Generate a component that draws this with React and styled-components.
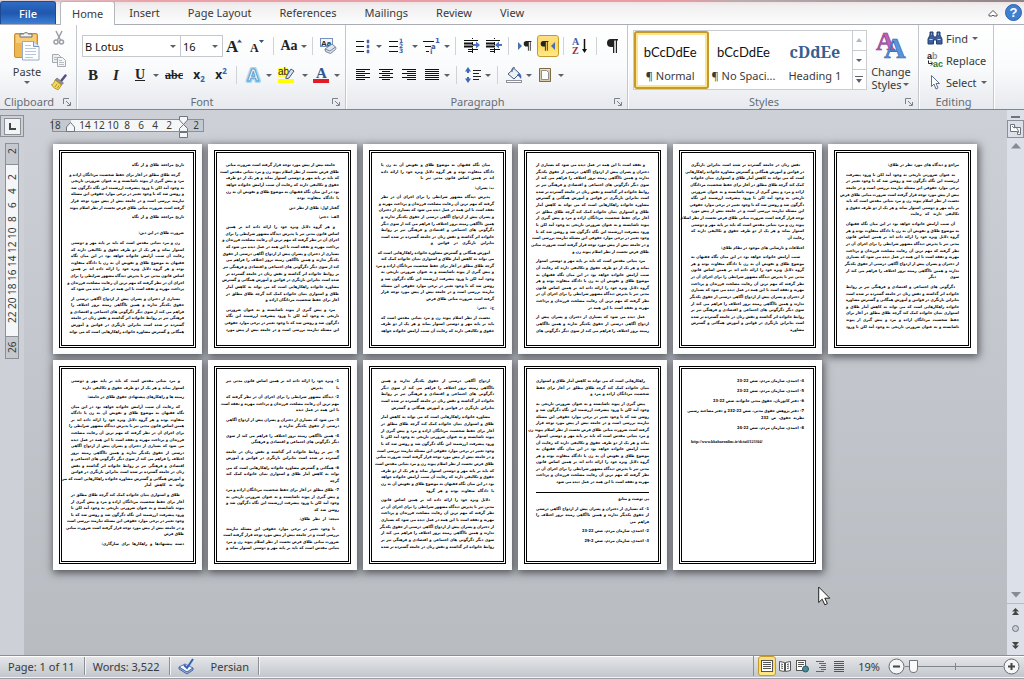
import styled, { createGlobalStyle, css, ThemeProvider } from 'styled-components';

const theme = {
  ui: "'Noto Sans', 'Open Sans', sans-serif",
  text: '#3a3a3a',
  muted: '#666d76',
  gold: '#c59a2c',
};

const GlobalStyle = createGlobalStyle`
  * { box-sizing: border-box; }
  body {
    margin: 0;
    font-family: ${theme.ui};
    font-size: 11px;
    color: ${theme.text};
  }
  button, input { font: inherit; color: inherit; }
`;

const Window = styled.div`
  display: flex;
  flex-direction: column;
  min-height: 100vh;
  overflow: hidden;
`;

/* ---------- tabs ---------- */

const TabBar = styled.nav`
  display: flex;
  align-items: flex-end;
  height: 25px;
  padding-right: 2px;
  border-bottom: 1px solid #a9adb3;
  background:
    linear-gradient(to right, #d9d5d8 0, #e9a3ab 14%, #ea9aa3 66%, #b9adb0 72%, #8d8587 100%) 0 0 / 100% 2px no-repeat,
    linear-gradient(#efd8da 0, #f0eeef 5px, #fdfdfd 24px);
`;

const FileTab = styled.button`
  width: 56px;
  height: 23px;
  margin-right: 4px;
  padding: 0;
  border: 1px solid #1d4a93;
  border-bottom: 0;
  border-radius: 3px 3px 0 0;
  background: linear-gradient(#2f6cc4, #1f57ad 50%, #3d81d6);
  color: #fff;
  font-weight: 500;
`;

const Tab = styled.button`
  height: 23px;
  padding: 0 14px 1px;
  border: 0;
  background: none;

  ${({ $active }) =>
    $active &&
    css`
      height: 24px;
      padding: 0 11px 1px;
      margin-bottom: -1px;
      border: 1px solid #b4b8be;
      border-bottom: 0;
      border-radius: 3px 3px 0 0;
      background: #fff;
    `}
`;

const TabTools = styled.div`
  display: flex;
  align-items: center;
  gap: 7px;
  height: 23px;
  margin-left: auto;
`;

/* ---------- ribbon ---------- */

const Ribbon = styled.header`
  display: flex;
  height: 85px;
  border-bottom: 1px solid #80858c;
  background: linear-gradient(#fff, #fafbfc 50%, #e6e9ee);
`;

const GroupBox = styled.section`
  display: flex;
  flex-direction: column;
  flex: 0 0 ${({ $width }) => $width}px;
  min-width: 0;
  border-right: 1px solid #c3c7cd;
  box-shadow: 1px 0 #fff;
`;

const GroupBody = styled.div`
  display: flex;
  flex: 1;
  padding: 5px 0 0 5px;
`;

const GroupFoot = styled.div`
  display: flex;
  align-items: center;
  height: 15px;
  padding-right: 5px;
  color: ${({ theme: t }) => t.muted};

  span {
    flex: 1;
    text-align: center;
  }
`;

const PlainButton = styled.button`
  display: inline-flex;
  align-items: center;
  justify-content: center;
  padding: 0;
  border: 0;
  background: none;
`;

const Launcher = styled(PlainButton)`
  justify-content: flex-end;
  width: 13px;
`;

const Rows = styled.div`
  display: flex;
  flex-direction: column;
  gap: 7px;
  padding-top: 5px;
`;

const ToolRow = styled.div`
  display: flex;
  align-items: center;
  height: 22px;
`;

const Tool = styled(PlainButton)`
  flex: 0 0 ${({ $width = 22 }) => $width}px;
  height: 22px;
  color: #222;

  ${({ $on }) =>
    $on &&
    css`
      border: 1px solid ${theme.gold};
      border-radius: 3px;
      background: linear-gradient(#fbe08a, #ffd95c 50%, #ffe98f);
    `}
`;

const Divider = styled.span`
  flex: 0 0 1px;
  height: 18px;
  margin: 0 ${({ $gap = 4 }) => $gap}px;
  background: #cfd2d7;
`;

const Caret = styled.span`
  flex: 0 0 8px;
  display: inline-flex;
  justify-content: center;

  &::after {
    content: '';
    border: 3px solid transparent;
    border-top-color: #5c6068;
    border-bottom: 0;
  }
`;

const Combo = styled.label`
  display: flex;
  align-items: center;
  width: ${({ $width }) => $width}px;
  height: 22px;
  padding-right: 3px;
  border: 1px solid #c5c8cd;
  background: #fff;

  & + & {
    margin-left: -1px;
  }

  input {
    flex: 1;
    min-width: 0;
    padding: 0 2px;
    border: 0;
    outline: 0;
    background: none;
    color: #111;
  }
`;

const Glyph = styled.span`
  font-family: ${({ $sans }) => ($sans ? theme.ui : "'Liberation Serif', serif")};
  font-size: ${({ $size = 15 }) => $size}px;
  font-weight: 700;
  font-style: ${({ $italic }) => ($italic ? 'italic' : 'normal')};
  text-decoration: ${({ $line = 'none' }) => $line};
  line-height: 1;

  sup,
  sub {
    color: #3c62a8;
    font-size: 8px;
    line-height: 0;
  }
`;

/* clipboard */

const PasteButton = styled(PlainButton)`
  flex-direction: column;
  width: 44px;
  height: 62px;
  justify-content: flex-start;
  gap: 2px;
`;

const IconColumn = styled.div`
  display: flex;
  flex-direction: column;
  align-items: center;
  gap: 6px;
  width: 20px;
`;

/* styles gallery */

const Gallery = styled.div`
  display: flex;
  flex: 0 0 234px;
  height: 60px;
  border: 1px solid #c9ccd1;
  background: #fff;
`;

const StyleCard = styled.button`
  flex: 1 1 0;
  min-width: 0;
  display: flex;
  flex-direction: column;
  align-items: center;
  justify-content: space-between;
  padding: 11px 3px 6px 0;
  border: 0;
  background: #fff;
  white-space: nowrap;

  ${({ $on }) =>
    $on &&
    css`
      padding: 9px 3px 4px 0;
      border: 2px solid ${theme.gold};
      border-radius: 3px;
      box-shadow: inset 0 0 0 2px #fbe48c;
    `}
`;

const Sample = styled.span`
  color: ${({ $heading }) => ($heading ? '#355e91' : '#111')};
  font-family: ${({ $heading }) => ($heading ? "'Noto Serif', 'DejaVu Serif', serif" : 'Lato, sans-serif')};
  font-size: ${({ $heading }) => ($heading ? 16 : 13)}px;
  font-weight: ${({ $heading }) => ($heading ? 700 : 400)};
  line-height: 20px;
`;

const GalleryScroll = styled.div`
  display: flex;
  flex-direction: column;
  width: 14px;
  border-left: 1px solid #c9ccd1;

  button {
    flex: 1;
  }
  button + button {
    border-top: 1px solid #c9ccd1;
  }
`;

const ChangeStyles = styled(PlainButton)`
  flex-direction: column;
  justify-content: flex-start;
  width: 48px;
  line-height: 13px;

  svg {
    margin-bottom: 5px;
  }
`;

const CaretLabel = styled.span`
  display: flex;
  align-items: center;
  gap: 1px;
  white-space: nowrap;
`;

const EditList = styled.div`
  display: flex;
  flex-direction: column;
  gap: 6px;
  padding-left: 3px;
`;

const EditButton = styled(PlainButton)`
  justify-content: flex-start;
  gap: 3px;
  height: 16px;
`;

/* ---------- workspace ---------- */

const Workspace = styled.main`
  position: relative;
  display: flex;
  flex: 1;
  background: linear-gradient(#cdd0d6, #c3c6cc 45%, #b8bbc0);
`;

const LeftRail = styled.div`
  display: flex;
  flex-direction: column;
  align-items: center;
  flex: 0 0 24px;
  padding-top: 5px;
  background: #cdd0d6;
`;

const TabSelector = styled(PlainButton)`
  width: 24px;
  height: 22px;
  border: 1px solid #8b9097;

  &::before {
    content: '';
    width: 5px;
    height: 5px;
    border: solid #444;
    border-width: 0 0 2px 2px;
    outline: 4px solid #f3f4f6;
    box-shadow: 0 0 0 5px #8b9097;
    background: #f3f4f6;
  }
`;

const VerticalRuler = styled.div`
  display: flex;
  flex-direction: column;
  width: 14px;
  margin-top: 6px;
  border: 1px solid #8b9097;
`;

const VerticalPart = styled.div`
  display: flex;
  flex-direction: column;
  align-items: center;
  padding: ${({ $start }) => $start}px 0 ${({ $end }) => $end}px;
  background: ${({ $margin }) => ($margin ? '#c5c9cf' : '#f5f6f8')};

  & + & {
    border-top: 1px solid #8b9097;
  }
  span {
    height: 14px;
    font-size: 10px;
    line-height: 12px;
    text-align: center;
    writing-mode: vertical-rl;
    transform: rotate(180deg);
  }
`;

const Canvas = styled.div`
  flex: 1;
  min-width: 0;
  padding: 9px 0 20px 28px;
`;

const Ruler = styled.div`
  position: relative;
  display: flex;
  width: 152px;
  height: 13px;
  border: 1px solid #8b9097;
  font-size: 10px;
  line-height: 11px;
`;

const RulerPart = styled.div`
  display: flex;
  justify-content: ${({ $align = 'center' }) => $align};
  flex: 0 0 ${({ $width }) => $width}px;
  min-width: 0;
  background: ${({ $margin }) => ($margin ? '#c5c9cf' : '#f5f6f8')};

  span {
    flex: 0 0 14px;
    text-align: center;
  }
`;

/* the outermost number hangs over the end of the ruler */
const RulerStart = styled(RulerPart)`
  span {
    margin-left: -5px;
  }
`;

const RulerMark = styled.svg`
  position: absolute;
  top: ${({ $top }) => $top}px;
  left: ${({ $left }) => $left}px;
`;

const Pages = styled.div`
  display: flex;
  flex-wrap: wrap;
  align-content: flex-start;
  gap: 6px;
  margin: 12px 0 0 1px;
`;

const Sheet = styled.article`
  width: 149px;
  height: 210px;
  padding: 6px;
  background: #fff;
  box-shadow: 1px 2px 8px 1px rgba(44, 48, 54, 0.75);
`;

const Frame = styled.div`
  display: flex;
  flex-direction: column;
  justify-content: space-between;
  height: 100%;
  padding: 9px 9px ${({ $tail }) => $tail}px;
  border: 3px double #000;
  direction: rtl;
  color: #000;
  font-family: 'DejaVu Sans Condensed', 'DejaVu Sans', sans-serif;
  font-size: 4px;
  font-weight: 700;
`;

const Line = styled.span`
  display: block;
  width: ${({ $span }) => $span}%;
  height: 6px;
  margin-top: ${({ $first }) => ($first ? 3 : 0)}px;
  padding-right: ${({ $indent }) => ($indent ? 4 : 0)}px;
  line-height: 6px;
  white-space: nowrap;
  text-align: justify;
  text-align-last: justify;

  &:first-child {
    margin-top: 0;
  }
`;

const Blank = styled.span`
  height: 6px;
`;

const Rule = styled.hr`
  width: 100%;
  height: 1px;
  margin: 6px 0 0;
  border: 0;
  background: #000;
`;

const SourceLink = styled.a`
  direction: ltr;
  color: #000;
  font-family: 'Liberation Serif', serif;
  line-height: 6px;
  text-decoration: none;
`;

const ScrollRail = styled.div`
  display: flex;
  flex-direction: column;
  align-items: center;
  flex: 0 0 17px;
  padding-top: 6px;
  background: #dce0e9;

  svg {
    display: block;
  }
`;

const RulerToggle = styled(PlainButton)`
  width: 17px;
  height: 18px;
  margin: 2px 0 5px;
  border: 1px solid #8b9097;
`;

const SplitBar = styled.span`
  width: 9px;
  height: 2px;
  background: #6f757e;
`;

const ScrollDown = styled(PlainButton)`
  margin: auto 0 5px;
`;

const RailFoot = styled.div`
  display: flex;
  flex-direction: column;
  align-items: center;
  align-self: stretch;
  gap: 10px;
  height: 52px;
  padding-top: 4px;
  border-top: 1px solid #b6bac2;
`;

const Pointer = styled.svg`
  position: absolute;
  top: 476px;
  left: 818px;
`;

/* ---------- status bar ---------- */

const StatusBar = styled.footer`
  display: flex;
  align-items: center;
  height: 24px;
  padding-bottom: 2px;
  border-top: 1px solid #8b9097;
  border-bottom: 1px solid #9a9ea5;
  box-shadow: inset 0 1px #fff, inset 0 -1px #f3f4f6;
  background: linear-gradient(#e4e6ea, #d3d6da 50%, #c1c4c9);
`;

const StatusItem = styled.span`
  display: flex;
  align-items: center;
  gap: 16px;
  height: 18px;
  padding: 0 9px 0 8px;
  border-right: 1px solid #8b9097;
  box-shadow: 1px 0 #f3f4f6;
`;

const ViewButtons = styled.div`
  display: flex;
  align-items: center;
  margin-left: auto;
  padding-left: 4px;
  border-left: 1px solid #8b9097;
`;

const ViewButton = styled(Tool)`
  flex-basis: 18px;
  height: 20px;
`;

const Zoom = styled.label`
  display: flex;
  align-items: center;
  gap: 8px;
  padding: 0 4px 0 10px;
`;

const ZoomRange = styled.input`
  appearance: none;
  width: 98px;
  height: 16px;
  margin: 0;
  background:
    linear-gradient(#80858c, #80858c) 50px 50% / 1px 7px no-repeat,
    linear-gradient(#80858c, #80858c) 0 50% / 100% 1px no-repeat;

  &::-webkit-slider-thumb {
    appearance: none;
    width: 9px;
    height: 13px;
    border: 1px solid #6f757e;
    border-radius: 1px 1px 5px 5px;
    background: #fafafa;
  }
`;

const ZoomTrack = styled.span`
  display: flex;
  align-items: center;
`;

/* ---------- icons ---------- */

const Svg = ({ w = 16, h = 16, children, ...rest }) => (
  <svg width={w} height={h} viewBox={`0 0 ${w} ${h}`} fill="none" overflow="visible" aria-hidden="true" {...rest}>
    {children}
  </svg>
);

const LauncherIcon = () => (
  <Svg w={8} h={8}>
    <path d="M.5 6V.5H6M3 3l4 4M7.500 4v3.500H4" stroke="#7b828c" />
  </Svg>
);

const PasteIcon = () => (
  <Svg w={28} h={32}>
    <rect x="1.500" y="3.500" width="23" height="24" rx="1.500" fill="#eeb750" stroke="#c98f35" />
    <rect x="3" y="5" width="20" height="8" fill="#f7cd78" />
    <path d="M7 7V4h3.500a3 3 0 0 1 5 0H19v3z" fill="#f2f2f2" stroke="#6e6e6e" />
    <path d="M9.500 11.500h11l5.500 5v13.500H9.500z" fill="#fdfeff" stroke="#9aa9c4" />
    <path d="M20.500 11.500v5H26" fill="#dce6f5" stroke="#7f95bb" />
    <path d="M12 15.500h6M12 18.500h11M12 21.500h11M12 24.500h11M12 27.500h8" stroke="#b9c7de" />
  </Svg>
);

const CutIcon = () => (
  <Svg>
    <path d="M5 1l4.500 9M11 1L6.500 10" stroke="#9b9fa6" strokeWidth="1.500" />
    <circle cx="5" cy="12" r="2" stroke="#9b9fa6" strokeWidth="1.500" />
    <circle cx="10.500" cy="12" r="2" stroke="#9b9fa6" strokeWidth="1.500" />
  </Svg>
);

const CopyIcon = () => (
  <Svg>
    <path d="M1.500 2.500h6l2 2v6h-8z" fill="#eceef0" stroke="#a5a9af" />
    <path d="M6.500 5.500h5l3 3v6h-8z" fill="#f5f6f7" stroke="#a5a9af" />
    <path d="M3 5.500h3M3 7.500h3M8 8.500h3M8 10.500h5M8 12.500h5" stroke="#b9bcc1" />
  </Svg>
);

const BrushIcon = () => (
  <Svg>
    <path d="M14.500 1.500l-4 5" stroke="#5a4a86" strokeWidth="2.500" strokeLinecap="round" />
    <path d="M6 4l6.500 5-2 2L4 6z" fill="#8a8d94" stroke="#666" strokeWidth=".6" />
    <path d="M4 6l6.500 5-3 4.500c-3 0-6-2.500-7-5 2-.5 3-2 3.500-4.500z" fill="#f3d75e" stroke="#b49426" />
    <path d="M4 13l2-3M6.500 14l1.500-2.500" stroke="#b49426" />
  </Svg>
);

const ResizeFontIcon = ({ down }) => (
  <Svg w={18} h={18}>
    <text x={down ? 1 : 0} y={15} fontFamily="Liberation Serif" fontWeight="700" fontSize={down ? 12 : 17} fill="#222">A</text>
    {down ? <path d="M10 3h5l-2.500 3z" fill="#34517f" /> : <path d="M11 5.500h5l-2.500-3z" fill="#34517f" />}
  </Svg>
);

const ClearFormatIcon = () => (
  <Svg w={18} h={18}>
    <rect x="1.500" y="1.500" width="12" height="8" fill="#f1f5fb" stroke="#7892bb" />
    <text x="2" y="9" fontFamily="Liberation Sans" fontSize="8" fontWeight="700" fill="#1f2d4a">Aa</text>
    <path d="M6 12l7-5 3.500 3c.5 1 .5 2 0 2.500l-5 4-5-2z" fill="#dfe5ee" stroke="#76839b" />
    <path d="M6 12l5 2 5.500-4" stroke="#76839b" />
  </Svg>
);

const GlowAIcon = () => (
  <Svg w={18} h={18}>
    <g fontFamily="Liberation Sans" fontSize="17" fontWeight="700" fill="#fff" strokeLinejoin="round">
      <text x="3" y="15" stroke="#a9d6f0" strokeWidth="4">A</text>
      <text x="3" y="15" stroke="#5a9ccb">A</text>
    </g>
  </Svg>
);

const HighlightIcon = () => (
  <Svg w={18} h={18}>
    <rect width="10" height="9" y="2" fill="#ffff3c" />
    <text x="0" y="9" fontFamily="Liberation Sans" fontSize="10" fill="#222">ab</text>
    <path d="M8 11l5-8 3 2-5 7-3 1z" fill="#d8e0ee" stroke="#4c5b7a" />
    <rect y="13" width="16" height="4" fill="#ffff00" />
  </Svg>
);

const FontColorIcon = () => (
  <Svg w={18} h={18}>
    <text x="4" y="12" fontFamily="Liberation Serif" fontSize="15" fontWeight="700" fill="#34558f">A</text>
    <rect x="1" y="13" width="16" height="4" fill="#e01b22" />
  </Svg>
);

const BulletIcon = () => (
  <Svg>
    <path d="M1 3.500h8M1 8.500h8M1 13.500h8" stroke="#111" />
    <path d="M12 2h2v3h-2zM12 7h2v3h-2zM12 12h2v3h-2z" fill="#4c67ae" stroke="#4c67ae" strokeWidth=".5" />
  </Svg>
);

const NumberIcon = () => (
  <Svg>
    <path d="M0 3.500h9M0 8.500h9M0 13.500h9" stroke="#111" />
    <g fontFamily="DejaVu Sans" fontSize="6" fontWeight="700" fill="#3d5ca8">
      <text x="10" y="5">1</text>
      <text x="10" y="10">2</text>
      <text x="10" y="15">3</text>
    </g>
  </Svg>
);

const MultilevelIcon = () => (
  <Svg>
    <path d="M0 3.500h11M2 8.500h6M3 13.500h3" stroke="#111" />
    <g fontFamily="DejaVu Sans" fontSize="7" fontWeight="700" fill="#3d5ca8">
      <text x="12" y="5">1</text>
      <text x="8" y="11">a</text>
      <text x="7" y="16">i</text>
    </g>
  </Svg>
);

const IndentIcon = ({ more }) => (
  <Svg w={17}>
    <path d="M1 2.500h14M5 11.500h10" stroke="#111" />
    <path d="M1 5.500h9M1 8.500h9" stroke="#111" strokeWidth="2" />
    <path d="M5 13.500h5" stroke="#111" />
    <path d="M9.500 0v16" stroke="#111" strokeDasharray="1 1" />
    <path d={more ? 'M17 6h-3V3.500l-4 3.500 4 3.500V8h3z' : 'M10 6h3V3.500l4 3.500-4 3.500V8h-3z'} fill="#4a74c0" />
  </Svg>
);

const Pilcrow = ({ x = 0, scale = 1 }) => (
  <path
    transform={`translate(${x} ${scale === 1 ? 1 : 3}) scale(${scale})`}
    d="M5 0h7v1.500h-1V14H9.800V1.500H8.300V14H7V8H5a4 4 0 0 1 0-8z"
    fill="#222"
  />
);

const DirectionIcon = ({ rtl }) => (
  <Svg>
    <Pilcrow x={rtl ? 0 : 6} scale={0.7} />
    <path d={rtl ? 'M15 4v8l-4-4z' : 'M1 4v8l4-4z'} fill="#4a6fb5" />
  </Svg>
);

const SortIcon = () => (
  <Svg w={17} h={18}>
    <text x="0" y="8" fontFamily="Liberation Serif" fontSize="10" fontWeight="700" fill="#3d5ca8">A</text>
    <text x="0" y="17" fontFamily="Liberation Serif" fontSize="10" fontWeight="700" fill="#9c2b33">Z</text>
    <path d="M12.500 2v12" stroke="#111" strokeWidth="1.500" />
    <path d="M10 12h5l-2.500 4z" fill="#111" />
  </Svg>
);

const alignPaths = {
  left: 'M1 2.500h14M1 4.500h9M1 6.500h14M1 8.500h9M1 10.500h14M1 12.500h9',
  center: 'M1 2.500h14M4 4.500h8M1 6.500h14M4 8.500h8M1 10.500h14M4 12.500h8',
  right: 'M1 2.500h14M6 4.500h9M1 6.500h14M6 8.500h9M1 10.500h14M6 12.500h9',
  justify: 'M1 2.500h14M1 4.500h14M1 6.500h14M1 8.500h14M1 10.500h14M1 12.500h14',
};

const AlignIcon = ({ side }) => (
  <Svg>
    <path d={alignPaths[side]} stroke="#111" />
  </Svg>
);

const SpacingIcon = () => (
  <Svg>
    <path d="M3 4v2M3 10v2" stroke="#3f68b5" strokeWidth="2" />
    <path d="M0 4.500h6L3 0zM0 11.500h6L3 16z" fill="#3f68b5" />
    <path d="M8 3.500h8M8 6.500h6M8 9.500h8M8 12.500h6" stroke="#222" />
  </Svg>
);

const ShadingIcon = () => (
  <Svg w={18}>
    <path d="M3 7l6-5.500 5.500 5L9 12z" fill="#eaf1fa" stroke="#44597f" />
    <path d="M7 5V2a2 2 0 0 1 3-1" stroke="#44597f" />
    <path d="M14 6c2 1 3 3 2 6-1-1-2-3-4-4z" fill="#3f68b5" />
    <rect x="1.500" y="13.500" width="15" height="2" fill="#fff" stroke="#8b9097" />
  </Svg>
);

const BorderIcon = () => (
  <Svg>
    <path d="M2 2.500h10.500l1.500 2V15H2z" fill="#d9cdb0" />
    <path d="M2.500 1.500h11v13h-11z" stroke="#7f6a3d" />
    <path d="M4.500 3.500h5l2 2v7h-7z" fill="#fff" stroke="#8b9097" />
  </Svg>
);

const ChangeStylesIcon = () => (
  <Svg w={30} h={30}>
    <g fontFamily="Liberation Serif" fontWeight="700" strokeWidth=".6">
      <text x="0" y="20" fontSize="26" fill="#bd62b8" stroke="#83307f">A</text>
      <text x="8" y="28" fontSize="30" fill="#5a94dc" stroke="#2b5fa8">A</text>
    </g>
  </Svg>
);

const FindIcon = () => (
  <Svg>
    <path d="M3 2h3v3l1 2h2l1-2V2h3v3l2 4v5H9.500v-4h-3v4H1V9l2-4z" fill="#3c5f9d" stroke="#263f70" />
    <path d="M2.500 9.500h3M10.500 9.500h3M4 4h1M11 4h1" stroke="#c8d9f3" />
  </Svg>
);

const ReplaceIcon = () => (
  <Svg>
    <g fontFamily="Liberation Sans" fontWeight="700">
      <text x="0" y="7" fontSize="9" fill="#222">a</text>
      <text x="5" y="7" fontSize="9" fill="#8f949b">b</text>
      <text x="6" y="15" fontSize="9" fill="#2d7a35">ac</text>
    </g>
    <path d="M1.500 8.500v3H5M4 9.500l2 2-2 2" stroke="#222" />
  </Svg>
);

const SelectIcon = () => (
  <Svg>
    <path d="M4.500 1.500v11l2.500-2.500 2 5 2-1-2-4.500h3.500z" fill="#fff" stroke="#5c7195" />
  </Svg>
);

const HelpIcon = () => (
  <Svg w={17} h={17}>
    <circle cx="8.500" cy="8.500" r="8" fill="#3f7fd0" stroke="#2d62ad" />
    <text x="8.500" y="13" textAnchor="middle" fontFamily="Liberation Sans" fontSize="13" fontWeight="700" fill="#fff">?</text>
  </Svg>
);

const ProofIcon = () => (
  <Svg w={17} h={16}>
    <path d="M1 9l6-3 8 4-6 4.500z" fill="#f6f9ff" stroke="#5573ae" />
    <path d="M1 9v2l8 5 6-4v-2l-6 4z" fill="#9db2dc" stroke="#4a68a5" />
    <path d="M6 7l3 3 6-9" stroke="#3560b4" strokeWidth="2" />
  </Svg>
);

const PrintLayoutIcon = () => (
  <Svg>
    <rect x="2.500" y="2.500" width="11" height="11" fill="#fff" stroke="#555" />
    <path d="M4 4.500h8M4 6.500h8M4 8.500h8M4 10.500h8" stroke="#555" />
  </Svg>
);

const ReadingIcon = () => (
  <Svg>
    <path d="M2.500 3.500l5 1v9l-5-1zM13.500 3.500l-5 1v9l5-1z" fill="#fff" stroke="#555" />
    <path d="M4 6l2 .5M4 8l2 .5M4 10l2 .5M10 6.500l2-.5M10 8.500l2-.5M10 10.500l2-.5" stroke="#555" />
  </Svg>
);

const WebIcon = () => (
  <Svg>
    <rect x="1.500" y="2.500" width="9" height="10" fill="#fff" stroke="#555" />
    <path d="M3 4.500h6M3 6.500h6M3 8.500h4" stroke="#555" />
    <circle cx="10.500" cy="11" r="3" fill="#4a8c8f" stroke="#2c5670" />
  </Svg>
);

const OutlineIcon = () => (
  <Svg>
    <path d="M3 3.500h8M6 5.500h7M8 7.500h5M6 9.500h7M8 11.500h5M3 13.500h8" stroke="#666" />
  </Svg>
);

const DraftIcon = () => (
  <Svg>
    <path d="M3 3.500h10M3 5.500h10M3 7.500h10M3 9.500h10M3 11.500h10M3 13.500h10" stroke="#555" />
  </Svg>
);

const ZoomButtonIcon = ({ plus }) => (
  <Svg w={17} h={17}>
    <circle cx="8.500" cy="8.500" r="7.500" fill="#f4f5f6" stroke="#666b73" />
    <path d={plus ? 'M5 8.500h7M8.500 5v7' : 'M5 8.500h7'} stroke="#444" strokeWidth="2" />
  </Svg>
);

/* ---------- document ---------- */

const prose = `
گرچه طلاق مطلق در آغاز برای حفظ شخصیت مردانگان اراده و مرد و پیش گیری از پیوند ناشایسته و به عنوان
ضرورتی تاریخی به وجود آمد لکن با ورود پیشرفت ارزشمند این نگاه دگرگون شد و روشن شد که با وجود تغییر در
برخی موارد حقوقی این مسئله نیازمند بررسی است و در جامعه بیش از پیش مورد توجه قرار گرفته است ضرورت
مبانی طلاق فرض نخست از نظر اسلام پیوند زن و مرد بنیانی مقدس است که باید بر پایه مهر و دوستی استوار
بماند و هر یک از دو طرف حقوق و تکالیفی دارند که رعایت آن سبب آرامش خانواده خواهد بود در این میان
نگاه فقیهان به موضوع طلاق و تفویض آن به زن یا دادگاه متفاوت بوده و هر گروه دلایل ویژه خود را
ارائه داده اند بر همین اساس قانون مدنی نیز با پذیرش دیدگاه مشهور شرایطی را برای اجرای آن در نظر
گرفته که مهم ترین آن رعایت مصلحت فرزندان و پرداخت مهریه و نفقه است با این همه در عمل دیده می شود
که بسیاری از دختران و پسران پیش از ازدواج آگاهی درستی از حقوق یکدیگر ندارند و همین ناآگاهی زمینه
بروز اختلاف را فراهم می کند از سوی دیگر دگرگونی های اجتماعی و اقتصادی و فرهنگی نیز بر روابط خانواده
اثر گذاشته و نقش زنان در جامعه گسترده تر شده است بنابراین بازنگری در قوانین و آموزش همگانی و
گسترش مشاوره خانواده راهکارهایی است که می تواند به کاهش آمار طلاق و استواری بنیان خانواده کمک کند
`.trim().split(/\s+/);

const LINE_CHARS = 58;

// Line widths are percentages of the column; a block with text is a heading.
const sheets = [
  {
    tail: 10,
    blocks: [
      { text: 'تاریخ مراجعه طلاق و از نگاه', span: 46 },
      { full: 5, last: 95 },
      { text: 'تاریخ مراجعه طلاق و از نگاه', span: 46 },
      'blank',
      { text: 'ضرورت طلاق در این دین:', span: 36 },
      { full: 8 },
      { full: 6 },
    ],
  },
  {
    tail: 12,
    blocks: [
      { full: 5, last: 37 },
      { text: 'گفتار اول: طلاق از نظر دین', span: 40 },
      { text: 'الف: دختر:', span: 18 },
      { full: 11, last: 65 },
      { full: 4 },
    ],
  },
  {
    tail: 11,
    blocks: [
      { full: 2, last: 65 },
      { text: 'ب: پسران:', span: 15 },
      { full: 7, last: 56 },
      { full: 7, last: 53 },
      { text: 'ج: دختر:', span: 15 },
      { full: 3 },
    ],
  },
  { tail: 11, blocks: [{ full: 13, last: 67 }, { full: 7, last: 54 }, { full: 3 }] },
  {
    tail: 12,
    blocks: [
      { full: 11, last: 14 },
      { text: 'اختلافات و نارسایی های موجود در نظام طلاق:', span: 73 },
      { full: 11, last: 15 },
    ],
  },
  {
    tail: 15,
    blocks: [
      { text: 'مراجع و دیدگاه های مورد نظر در طلاق:', span: 63 },
      { full: 6, last: 43 },
      { full: 8, last: 27 },
      { full: 7 },
    ],
  },
  {
    tail: 14,
    blocks: [
      { full: 1, last: 90 },
      { text: 'زمینه ها و راهکارهای پیشنهادی حقوق طلاق در جامعه:', span: 84 },
      { full: 12, last: 35 },
      { full: 6, last: 14 },
      { text: 'دسته پیشنهادها و راهکارها برای سازگاری:', span: 73 },
    ],
  },
  {
    tail: 10,
    blocks: [
      { lead: '1-', full: 1, last: 25 },
      { lead: '2-', full: 2, last: 38 },
      { lead: '3-', full: 1, last: 53 },
      { lead: '4-', full: 1, last: 76 },
      { lead: '5-', full: 2 },
      { lead: '6-', full: 2, last: 15 },
      { lead: '7-', full: 3, last: 22 },
      { text: 'نتیجه: از نظر طلاق:', span: 35 },
      { full: 4 },
    ],
  },
  { tail: 11, blocks: [{ full: 4, last: 91 }, { full: 11, last: 60 }, { full: 8 }] },
  {
    tail: 17,
    blocks: [
      { full: 2, last: 52 },
      { full: 12, last: 82 },
      'rule',
      { text: 'پی نوشت و منابع', span: 25 },
      { lead: '1-', full: 2, last: 17 },
      { text: '2- احمدی، سازمان مردم، صص 22-23', span: 57 },
      { text: '3- احمدی، سازمان مردم، صص 2-29', span: 55 },
    ],
  },
  {
    tail: 116,
    blocks: [
      { text: '4- احمدی، سازمان مردم، صص 22-23', span: 57 },
      { text: '5- احمدی، سازمان مردم، صص 22-23', span: 57 },
      { text: '6- دفتر کاتوزیان، حقوق مدنی خانواده، صص 22-23', span: 80 },
      { text: '7- دفتر پژوهش حقوق مدنی، صص 22-232 و دفتر مصاحبه رسمی', span: 100 },
      { text: 'نظریه حقوق، ص 232', span: 38, joined: true },
      { text: '8- احمدی، سازمان مردم، صص 22-24', span: 57 },
      'blank',
      { link: 'http://www.khabaronline.ir/detail/123304/' },
    ],
  },
];

const makeReader = (start) => {
  let at = start;
  return (span) => {
    const limit = (LINE_CHARS * span) / 100;
    const words = [];
    let length = 0;
    for (;;) {
      const word = prose[at % prose.length];
      if (words.length && length + word.length > limit) break;
      words.push(word);
      length += word.length + 1;
      at += 1;
    }
    return words.join(' ');
  };
};

const Block = ({ block, read }) => {
  if (block === 'blank') return <Blank />;
  if (block === 'rule') return <Rule />;
  if (block.link) return <SourceLink href={block.link}>{block.link}</SourceLink>;
  if (block.text) {
    return (
      <Line $span={block.span} $first={!block.joined}>
        {block.text}
      </Line>
    );
  }
  const spans = Array(block.full).fill(100);
  if (block.last) spans.push(block.last);
  return spans.map((span, i) => (
    <Line key={i} $span={span} $first={i === 0} $indent={i === 0 && !block.lead}>
      {i === 0 && block.lead ? `${block.lead} ` : ''}
      {read(i === 0 ? span - 6 : span)}
    </Line>
  ));
};

const Page = ({ sheet, index }) => {
  const read = makeReader(index * 53);
  return (
    <Sheet>
      <Frame $tail={sheet.tail}>
        {sheet.blocks.map((block, i) => (
          <Block key={i} block={block} read={read} />
        ))}
      </Frame>
    </Sheet>
  );
};

/* ---------- ribbon groups ---------- */

const Group = ({ label, width, launcher = true, children }) => (
  <GroupBox $width={width} aria-label={label}>
    <GroupBody>{children}</GroupBody>
    <GroupFoot>
      <span>{label}</span>
      {launcher && (
        <Launcher aria-label={`${label} options`}>
          <LauncherIcon />
        </Launcher>
      )}
    </GroupFoot>
  </GroupBox>
);

const ClipboardGroup = () => (
  <Group label="Clipboard" width={77}>
    <PasteButton>
      <PasteIcon />
      Paste
      <Caret />
    </PasteButton>
    <IconColumn>
      <PlainButton aria-label="Cut"><CutIcon /></PlainButton>
      <PlainButton aria-label="Copy"><CopyIcon /></PlainButton>
      <PlainButton aria-label="Format Painter"><BrushIcon /></PlainButton>
    </IconColumn>
  </Group>
);

const FontGroup = () => (
  <Group label="Font" width={269}>
    <Rows>
      <ToolRow>
        <Combo $width={99}>
          <input aria-label="Font" defaultValue="B Lotus" />
          <Caret />
        </Combo>
        <Combo $width={43}>
          <input aria-label="Font size" defaultValue="16" />
          <Caret />
        </Combo>
        <Tool $width={24} aria-label="Grow Font"><ResizeFontIcon /></Tool>
        <Tool aria-label="Shrink Font"><ResizeFontIcon down /></Tool>
        <Divider />
        <Tool aria-label="Change Case"><Glyph $size={14}>Aa</Glyph></Tool>
        <Caret />
        <Divider />
        <Tool aria-label="Clear Formatting"><ClearFormatIcon /></Tool>
      </ToolRow>
      <ToolRow>
        <Tool aria-label="Bold"><Glyph>B</Glyph></Tool>
        <Tool $width={24} aria-label="Italic"><Glyph $italic>I</Glyph></Tool>
        <Tool $width={24} aria-label="Underline"><Glyph $size={14} $line="underline">U</Glyph></Tool>
        <Caret />
        <Tool $width={28} aria-label="Strikethrough"><Glyph $size={12} $line="line-through">abc</Glyph></Tool>
        <Tool aria-label="Subscript"><Glyph $sans $size={12}>x<sub>2</sub></Glyph></Tool>
        <Tool aria-label="Superscript"><Glyph $sans $size={12}>x<sup>2</sup></Glyph></Tool>
        <Divider />
        <Tool $width={24} aria-label="Text Effects"><GlowAIcon /></Tool>
        <Caret />
        <Tool $width={28} aria-label="Text Highlight Color"><HighlightIcon /></Tool>
        <Caret />
        <Tool $width={24} aria-label="Font Color"><FontColorIcon /></Tool>
        <Caret />
      </ToolRow>
    </Rows>
  </Group>
);

const ParagraphGroup = () => (
  <Group label="Paragraph" width={282}>
    <Rows>
      <ToolRow>
        <Tool $width={24} aria-label="Bullets"><BulletIcon /></Tool>
        <Caret />
        <Tool $width={28} aria-label="Numbering"><NumberIcon /></Tool>
        <Caret />
        <Tool $width={24} aria-label="Multilevel List"><MultilevelIcon /></Tool>
        <Caret />
        <Divider />
        <Tool aria-label="Decrease Indent"><IndentIcon /></Tool>
        <Tool aria-label="Increase Indent"><IndentIcon more /></Tool>
        <Divider />
        <Tool $width={24} aria-label="Left-to-Right"><DirectionIcon /></Tool>
        <Tool $on aria-label="Right-to-Left"><DirectionIcon rtl /></Tool>
        <Divider />
        <Tool $width={24} aria-label="Sort"><SortIcon /></Tool>
        <Divider />
        <Tool $width={24} aria-label="Show marks"><Svg><Pilcrow x={1} /></Svg></Tool>
      </ToolRow>
      <ToolRow>
        <Tool $width={24} aria-label="Align Left"><AlignIcon side="left" /></Tool>
        <Tool aria-label="Center"><AlignIcon side="center" /></Tool>
        <Tool $width={24} aria-label="Align Right"><AlignIcon side="right" /></Tool>
        <Tool aria-label="Justify"><AlignIcon side="justify" /></Tool>
        <Caret />
        <Divider $gap={5} />
        <Tool aria-label="Line Spacing"><SpacingIcon /></Tool>
        <Caret />
        <Divider $gap={5} />
        <Tool aria-label="Shading"><ShadingIcon /></Tool>
        <Caret />
        <Tool $width={24} aria-label="Borders"><BorderIcon /></Tool>
        <Caret />
      </ToolRow>
    </Rows>
  </Group>
);

const StylesGroup = () => (
  <Group label="Styles" width={291}>
    <Gallery>
      <StyleCard $on>
        <Sample>bCcDdEe</Sample>
        <span>¶ Normal</span>
      </StyleCard>
      <StyleCard>
        <Sample>bCcDdEe</Sample>
        <span>¶ No Spaci...</span>
      </StyleCard>
      <StyleCard>
        <Sample $heading>cDdEe</Sample>
        <span>Heading 1</span>
      </StyleCard>
      <GalleryScroll>
        <PlainButton aria-label="Previous styles">
          <Svg w={6} h={4}><path d="M0 4h6L3 0z" fill="#b5b8bd" /></Svg>
        </PlainButton>
        <PlainButton aria-label="Next styles"><Caret /></PlainButton>
        <PlainButton aria-label="More styles">
          <Svg w={8} h={8}><path d="M0 .5h8" stroke="#5c6068" /><path d="M1 3h6L4 7z" fill="#5c6068" /></Svg>
        </PlainButton>
      </GalleryScroll>
    </Gallery>
    <ChangeStyles>
      <ChangeStylesIcon />
      <CaretLabel>Change</CaretLabel>
      <CaretLabel>Styles <Caret /></CaretLabel>
    </ChangeStyles>
  </Group>
);

const EditingGroup = () => (
  <Group label="Editing" width={75} launcher={false}>
    <EditList>
      <EditButton><FindIcon />Find <Caret /></EditButton>
      <EditButton><ReplaceIcon />Replace</EditButton>
      <EditButton><SelectIcon />Select <Caret /></EditButton>
    </EditList>
  </Group>
);

const tabs = ['Home', 'Insert', 'Page Layout', 'References', 'Mailings', 'Review', 'View'];

const views = [
  ['Print Layout', PrintLayoutIcon],
  ['Full Screen Reading', ReadingIcon],
  ['Web Layout', WebIcon],
  ['Outline', OutlineIcon],
  ['Draft', DraftIcon],
];

const Numbers = ({ values }) => values.map((n) => <span key={n}>{n}</span>);

export default function App() {
  return (
    <ThemeProvider theme={theme}>
      <GlobalStyle />
      <Window>
        <TabBar>
          <FileTab>File</FileTab>
          {tabs.map((tab) => (
            <Tab key={tab} $active={tab === 'Home'}>
              {tab}
            </Tab>
          ))}
          <TabTools>
            <PlainButton aria-label="Minimize the Ribbon">
              <Svg w={10} h={8}><path d="M1 5.500l4-4 4 4v1.500H6L5 6 4 7H1z" fill="#fff" stroke="#555" /></Svg>
            </PlainButton>
            <PlainButton aria-label="Help"><HelpIcon /></PlainButton>
          </TabTools>
        </TabBar>

        <Ribbon>
          <ClipboardGroup />
          <FontGroup />
          <ParagraphGroup />
          <StylesGroup />
          <EditingGroup />
        </Ribbon>

        <Workspace>
          <LeftRail>
            <TabSelector aria-label="Tab selector" />
            <VerticalRuler>
              <VerticalPart $margin $start={0} $end={6}><Numbers values={[2]} /></VerticalPart>
              <VerticalPart $start={5} $end={12}>
                <Numbers values={[2, 4, 6, 8, 10, 12, 14, 16, 18, 20, 22]} />
              </VerticalPart>
              <VerticalPart $margin $start={3} $end={4}><Numbers values={[26]} /></VerticalPart>
            </VerticalRuler>
          </LeftRail>

          <Canvas>
            <Ruler>
              <RulerStart $margin $width={18} $align="flex-start"><span>18</span></RulerStart>
              <RulerPart $width={112}><Numbers values={[14, 12, 10, 8, 6, 4, 2]} /></RulerPart>
              <RulerPart $margin $width={20} $align="flex-end"><span>2</span></RulerPart>
              <RulerMark $top={2} $left={13} width="9" height="10" viewBox="0 0 9 10">
                <path d="M.5 9.500V5l4-4.500L8.500 5v4.500z" fill="#f5f6f8" stroke="#6f757e" />
              </RulerMark>
              <RulerMark $top={-4} $left={126} width="9" height="22" viewBox="0 0 9 22">
                <path d="M.5.5h8V4l-4 4.500L.5 4zM.5 15.500v-3l4-4 4 4v3zM.5 16.500h8v5h-8z" fill="#f5f6f8" stroke="#6f757e" />
              </RulerMark>
            </Ruler>
            <Pages>
              {sheets.map((sheet, i) => (
                <Page key={i} sheet={sheet} index={i} />
              ))}
            </Pages>
          </Canvas>

          <ScrollRail>
            <SplitBar />
            <RulerToggle aria-label="View Ruler">
              <Svg w={13} h={13}>
                <path d="M1.500 1.500h4v3h6v7h-3v-3h-7z" fill="#fff" stroke="#6f757e" />
                <path d="M3 3l2 2 2-1 2 3 1 3" stroke="#6f757e" />
              </Svg>
            </RulerToggle>
            <PlainButton aria-label="Scroll up">
              <Svg w={10} h={6}><path d="M0 5.500h10L5 0z" fill="#868c95" /></Svg>
            </PlainButton>
            <ScrollDown aria-label="Scroll down">
              <Svg w={10} h={6}><path d="M0 0h10L5 5.500z" fill="#868c95" /></Svg>
            </ScrollDown>
            <RailFoot>
              <Svg w={7} h={7}><path d="M0 3.500L3.500 0 7 3.500zM0 7l3.500-4L7 7z" fill="#444" /></Svg>
              <Svg w={7} h={7}><circle cx="3.500" cy="3.500" r="3" fill="#c9cdd4" stroke="#6f757e" /></Svg>
              <Svg w={7} h={7}><path d="M0 0h7L3.500 4zM0 3.500h7L3.500 7z" fill="#444" /></Svg>
            </RailFoot>
          </ScrollRail>

          <Pointer width="13" height="20" viewBox="0 0 13 20">
            <path d="M.7 1v15.500l3.500-3.300 2.600 5.600 2.600-1.200-2.600-5.400h5z" fill="#fff" stroke="#222" />
          </Pointer>
        </Workspace>

        <StatusBar>
          <StatusItem>Page: 1 of 11</StatusItem>
          <StatusItem>Words: 3,522</StatusItem>
          <StatusItem><ProofIcon />Persian</StatusItem>
          <ViewButtons>
            {views.map(([label, Icon], i) => (
              <ViewButton key={label} $on={i === 0} aria-label={label}>
                <Icon />
              </ViewButton>
            ))}
          </ViewButtons>
          <Zoom>
            19%
            <ZoomTrack>
              <PlainButton aria-label="Zoom out"><ZoomButtonIcon /></PlainButton>
              <ZoomRange type="range" min="0" max="100" defaultValue="5" aria-label="Zoom" />
              <PlainButton aria-label="Zoom in"><ZoomButtonIcon plus /></PlainButton>
            </ZoomTrack>
          </Zoom>
        </StatusBar>
      </Window>
    </ThemeProvider>
  );
}
